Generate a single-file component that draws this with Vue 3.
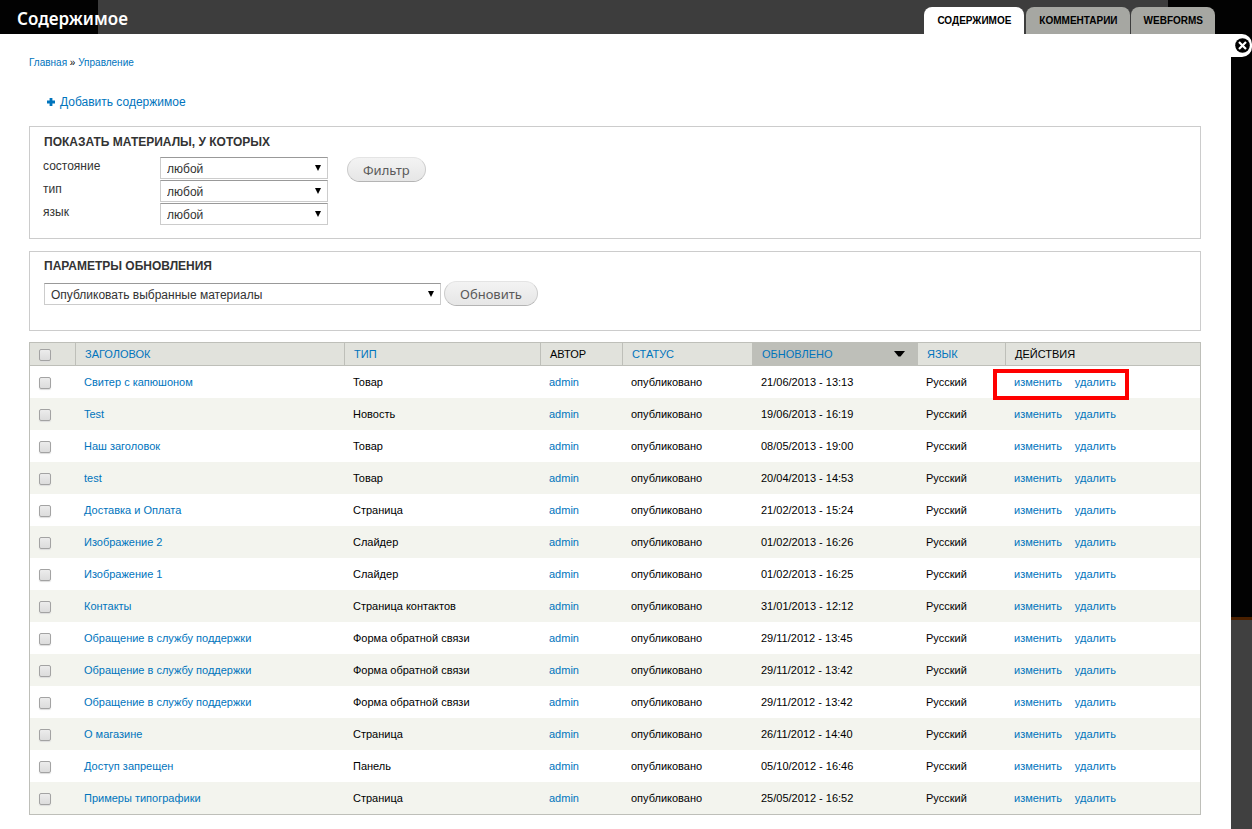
<script setup>
import { ref } from 'vue'

const filters = [
  { id: 'status', label: 'состояние' },
  { id: 'type', label: 'тип' },
  { id: 'language', label: 'язык' },
]

const columns = [
  { key: 'title', label: 'Заголовок', sortable: true },
  { key: 'type', label: 'Тип', sortable: true },
  { key: 'author', label: 'Автор' },
  { key: 'status', label: 'Статус', sortable: true },
  { key: 'updated', label: 'Обновлено', sortable: true, active: true },
  { key: 'language', label: 'Язык', sortable: true },
  { key: 'actions', label: 'Действия' },
]

const rows = [
  ['Свитер с капюшоном', 'Товар', '21/06/2013 - 13:13'],
  ['Test', 'Новость', '19/06/2013 - 16:19'],
  ['Наш заголовок', 'Товар', '08/05/2013 - 19:00'],
  ['test', 'Товар', '20/04/2013 - 14:53'],
  ['Доставка и Оплата', 'Страница', '21/02/2013 - 15:24'],
  ['Изображение 2', 'Слайдер', '01/02/2013 - 16:26'],
  ['Изображение 1', 'Слайдер', '01/02/2013 - 16:25'],
  ['Контакты', 'Страница контактов', '31/01/2013 - 12:12'],
  ['Обращение в службу поддержки', 'Форма обратной связи', '29/11/2012 - 13:45'],
  ['Обращение в службу поддержки', 'Форма обратной связи', '29/11/2012 - 13:42'],
  ['Обращение в службу поддержки', 'Форма обратной связи', '29/11/2012 - 13:42'],
  ['О магазине', 'Страница', '26/11/2012 - 14:40'],
  ['Доступ запрещен', 'Панель', '05/10/2012 - 16:46'],
  ['Примеры типографики', 'Страница', '25/05/2012 - 16:52'],
]

const selected = ref([])
const toggleAll = (e) => {
  selected.value = e.target.checked ? rows.map((_, i) => i) : []
}
</script>

<template>
  <div class="page">
    <header class="top">
      <h1>Содержимое</h1>
      <nav class="tabs">
        <a href="#" class="tab active">Содержимое</a>
        <a href="#" class="tab">Комментарии</a>
        <a href="#" class="tab">Webforms</a>
      </nav>
    </header>

    <div class="body">
      <main class="content">
        <nav class="breadcrumb"><a href="#">Главная</a> » <a href="#">Управление</a></nav>

        <a href="#" class="add">
          <svg width="8" height="8" viewBox="0 0 8 8" aria-hidden="true"><path d="M2.600 0h2.800v2.600H8v2.800H5.400V8H2.600V5.400H0V2.600h2.600z" fill="#0074bd" /></svg>
          Добавить содержимое
        </a>

        <section class="panel filter-panel">
          <h2>Показать материалы, у которых</h2>
          <div class="filter-row">
            <div class="fields">
              <div v-for="f in filters" :key="f.id" class="field">
                <label :for="f.id">{{ f.label }}</label>
                <span class="select"><select :id="f.id"><option>любой</option></select></span>
              </div>
            </div>
            <button type="button">Фильтр</button>
          </div>
        </section>

        <section class="panel update-panel">
          <h2>Параметры обновления</h2>
          <div class="update-row">
            <span class="select wide">
              <select aria-label="Параметры обновления"><option>Опубликовать выбранные материалы</option></select>
            </span>
            <button type="button">Обновить</button>
          </div>
        </section>

        <table>
          <colgroup>
            <col class="c-check"><col class="c-title"><col class="c-type"><col class="c-author">
            <col class="c-status"><col class="c-updated"><col class="c-language"><col>
          </colgroup>
          <thead>
            <tr>
              <th class="check"><input type="checkbox" aria-label="Выбрать все" @change="toggleAll"></th>
              <th v-for="c in columns" :key="c.key" :class="{ sorted: c.active }">
                <a v-if="c.sortable" href="#">{{ c.label }}
                  <svg v-if="c.active" width="11" height="6" viewBox="0 0 11 6" aria-hidden="true"><path d="M0 0h11L6.500 5.500h-2z" fill="#000" /></svg>
                </a>
                <template v-else>{{ c.label }}</template>
              </th>
            </tr>
          </thead>
          <tbody>
            <tr v-for="(r, i) in rows" :key="i">
              <td class="check"><input v-model="selected" type="checkbox" :value="i" :aria-label="r[0]"></td>
              <td><a href="#">{{ r[0] }}</a></td>
              <td>{{ r[1] }}</td>
              <td><a href="#">admin</a></td>
              <td>опубликовано</td>
              <td>{{ r[2] }}</td>
              <td>Русский</td>
              <td>
                <span class="actions" :class="{ marked: i === 0 }"><a href="#">изменить</a><a href="#">удалить</a></span>
              </td>
            </tr>
          </tbody>
        </table>
      </main>

      <aside class="backdrop">
        <button type="button" class="close" aria-label="Закрыть">
          <svg width="15" height="15" viewBox="0 0 15 15" aria-hidden="true">
            <circle cx="7.500" cy="7.500" r="7.300" fill="#000" />
            <path d="M4 4l7 7M11 4l-7 7" stroke="#fff" stroke-width="2.200" />
          </svg>
        </button>
      </aside>
    </div>
  </div>
</template>

<style>
body {
  margin: 0;
  background: #fff;
}
</style>

<style scoped>
* {
  box-sizing: border-box;
}
.page {
  min-height: 100vh;
  display: flex;
  flex-direction: column;
  font: 11px/16px "Liberation Sans", Arial, sans-serif;
  color: #000;
}
a {
  color: #0074bd;
  text-decoration: none;
}
.top {
  height: 34px;
  display: flex;
  justify-content: space-between;
  align-items: flex-end;
  padding: 0 37px 0 17px;
  background: linear-gradient(to right, #020202 98px, #3d3d3d 98px, #3d3d3d calc(100% - 84px), #020202 calc(100% - 84px));
}
h1 {
  margin: 0;
  align-self: center;
  color: #fff;
  font: 600 17px/24px "Noto Sans", "Open Sans", sans-serif;
  padding-top: 3px;
}
.tabs {
  display: flex;
  gap: 1px;
}
.tab {
  height: 27px;
  padding: 0 12px 0 13px;
  border-radius: 8px 8px 0 0;
  background: #a6a7a2;
  color: #000;
  font-size: 10px;
  font-weight: bold;
  line-height: 27px;
  text-transform: uppercase;
}
.tab.active {
  background: #fff;
  padding-right: 13px;
  margin-right: 1px;
}
.body {
  flex: 1;
  display: flex;
}
.content {
  flex: 1;
  min-width: 0;
  padding: 21px 30px 14px 29px;
  background: #fff;
}
.breadcrumb {
  font-size: 10px;
  line-height: 16px;
}
.add {
  display: flex;
  align-items: center;
  gap: 5px;
  width: max-content;
  margin: 23px 0 16px 18px;
  font-size: 12px;
  line-height: 16px;
}
.panel {
  border: 1px solid #ccc;
  padding: 7px 14px 12px;
  margin-bottom: 12px;
  color: #333;
  font-size: 12px;
}
h2 {
  margin: 0;
  font-size: 12px;
  line-height: 16px;
  text-transform: uppercase;
}
.filter-row {
  display: flex;
  align-items: flex-start;
  gap: 19px;
  margin: 7px 0 0 -1px;
}
.fields {
  display: grid;
}
.field {
  display: flex;
  height: 23px;
}
.field label {
  width: 117px;
  line-height: 18px;
}
.select {
  position: relative;
  display: block;
  width: 168px;
  height: 22px;
}
.select::after {
  content: "";
  position: absolute;
  right: 7px;
  top: 8px;
  border: solid transparent;
  border-width: 6px 3px 0;
  border-top-color: #000;
  pointer-events: none;
}
.wide {
  width: 397px;
}
select {
  appearance: none;
  display: block;
  width: 100%;
  height: 100%;
  margin: 0;
  padding: 2px 6px 0;
  border: 1px solid #ccc;
  border-top-color: #999;
  border-radius: 0;
  background: #fff;
  color: #333;
  font: 12px/16px "Liberation Sans", Arial, sans-serif;
}
.panel button {
  height: 25px;
  padding: 0 15px;
  border: 1px solid #ccc;
  border-top-color: #e4e4e4;
  border-bottom-color: #b4b4b4;
  border-radius: 13px;
  background: linear-gradient(#f3f3f3, #e6e6e6);
  color: #5a5a5a;
  font: 13px/20px "Noto Sans", "Open Sans", sans-serif;
}
.update-panel {
  padding-top: 6px;
  padding-bottom: 24px;
  margin-bottom: 11px;
}
.update-row {
  display: flex;
  align-items: center;
  gap: 3px;
  margin-top: 7px;
}
table {
  width: 100%;
  table-layout: fixed;
  border: 1px solid #bebfb9;
  border-collapse: separate;
  border-spacing: 0;
}
.c-check { width: 45px; }
.c-title { width: 269px; }
.c-type { width: 196px; }
.c-author { width: 82px; }
.c-status { width: 130px; }
.c-updated { width: 165px; }
.c-language { width: 88px; }
th {
  height: 23px;
  padding: 0 9px;
  border-left: 1px solid #bebfb9;
  border-bottom: 1px solid #bebfb9;
  background: #e1e2dc;
  font-weight: normal;
  text-align: left;
  text-transform: uppercase;
}
th.sorted {
  background: #bebfb9;
}
th.sorted a {
  display: flex;
  align-items: center;
  justify-content: space-between;
  padding-right: 3px;
}
td {
  height: 32px;
  padding: 0 9px;
}
th.check,
td.check {
  padding: 2px 9px 0;
  border-left: 0;
}
tbody tr:nth-child(even) {
  background: #f3f4ee;
}
input {
  appearance: none;
  display: block;
  width: 12px;
  height: 12px;
  margin: 0;
  border: 1px solid #a3a3a3;
  border-radius: 2px;
  background: linear-gradient(#ececec, #dcdcdc);
  box-shadow: 0 1px 1px #ddd;
}
input:checked {
  background: #0074bd;
}
.actions {
  position: relative;
  display: inline-flex;
  gap: 13px;
}
.marked::after {
  content: "";
  position: absolute;
  inset: -5px -13px -10px -21px;
  border: 4px solid #f00;
  pointer-events: none;
}
.backdrop {
  width: 21px;
  background: linear-gradient(#020202 583px, #4a2000 583px, #4a2000 586px, #404040 586px);
}
.close {
  display: block;
  width: 21px;
  height: 23px;
  padding: 4px 2px 4px 4px;
  border: 0;
  border-radius: 0 10px 10px 0;
  background: #fff;
}
.close svg {
  display: block;
}
</style>
